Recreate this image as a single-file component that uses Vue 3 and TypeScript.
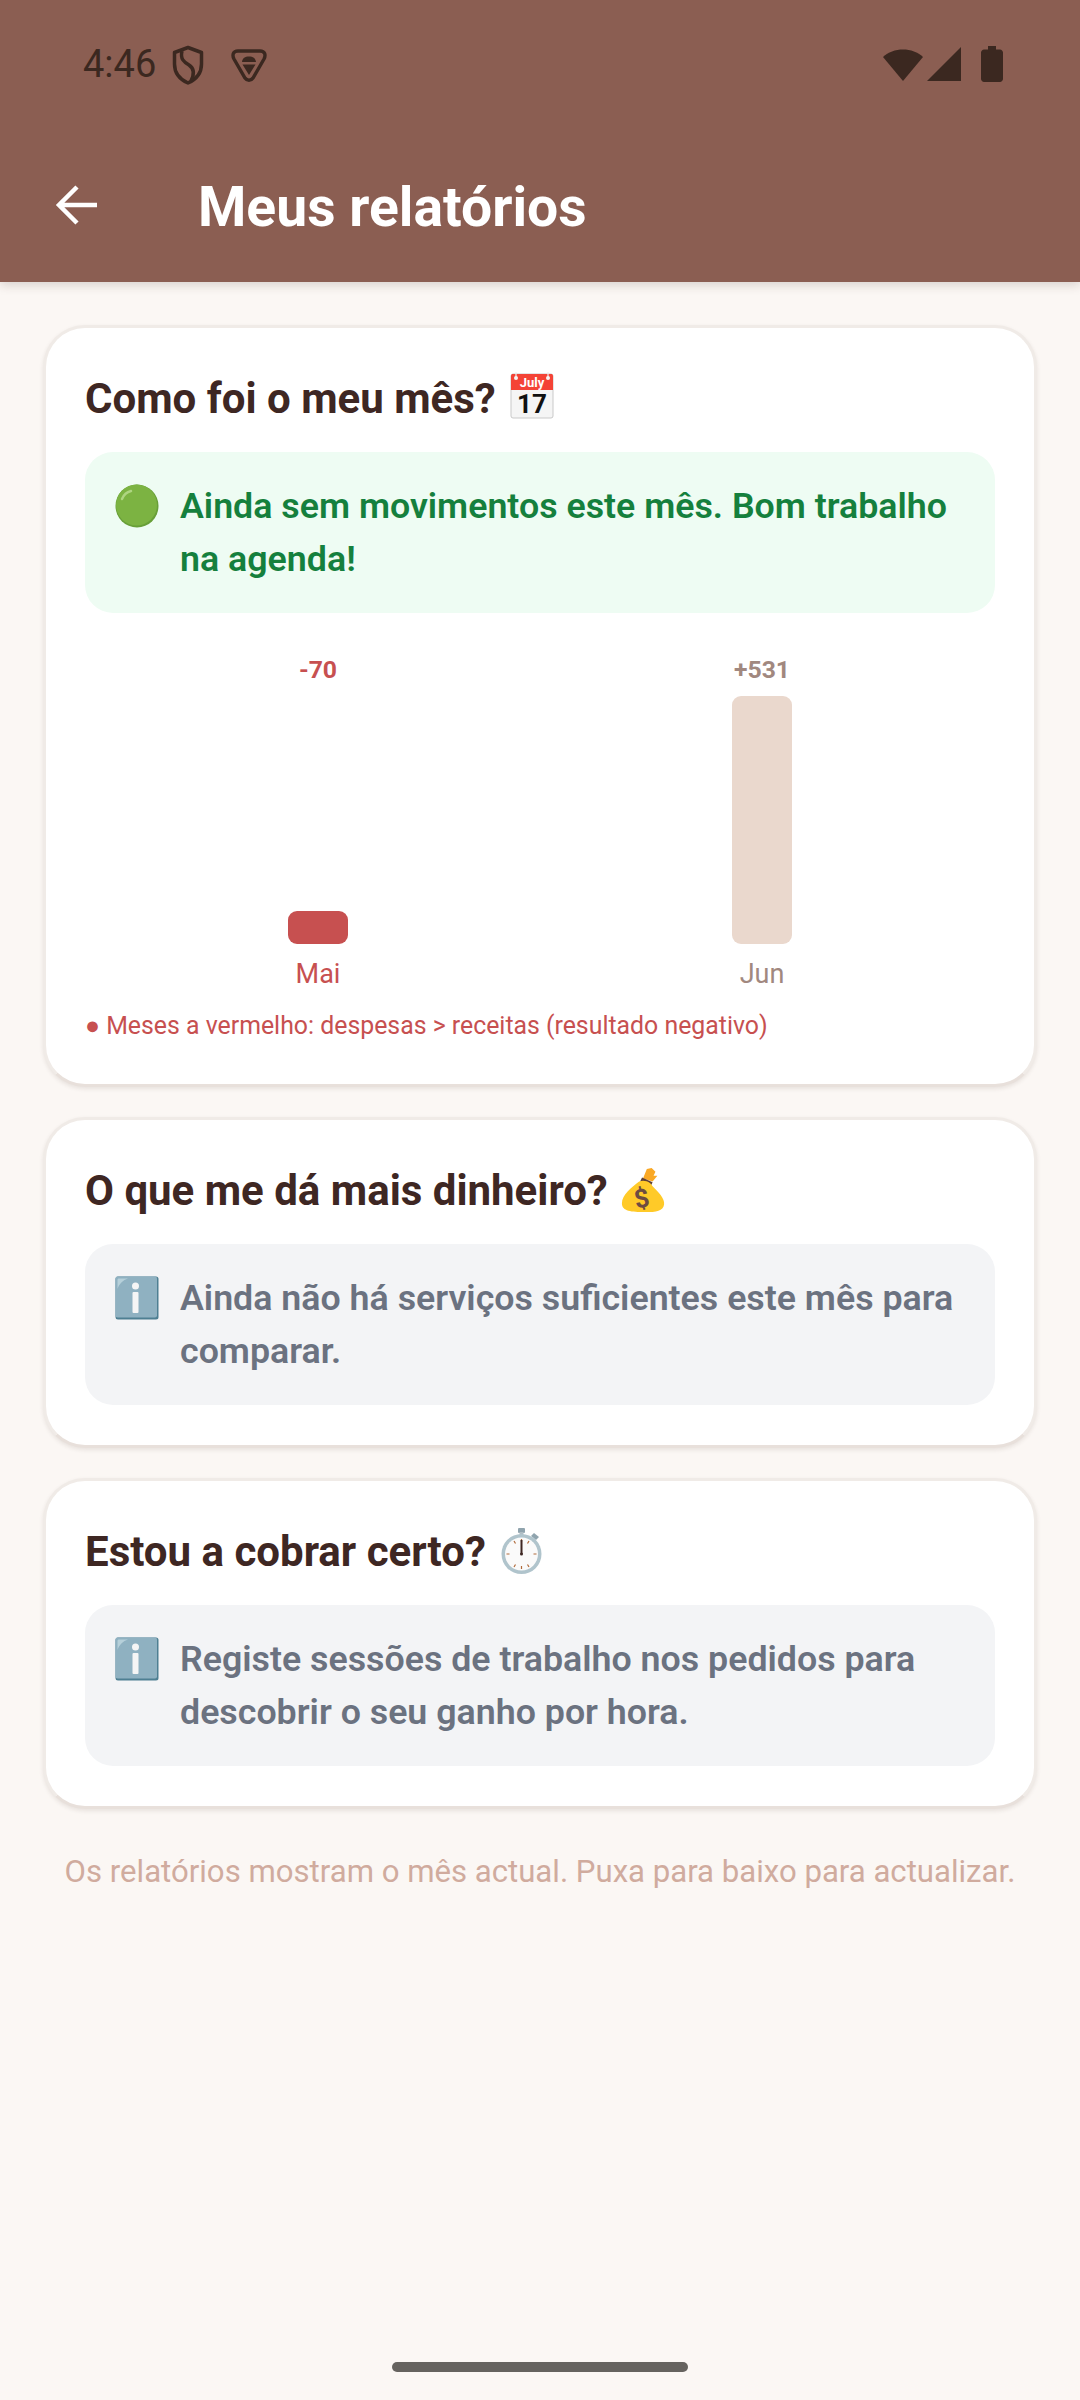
<script setup lang="ts">
interface Bar {
  month: string
  value: string
  height: number
  negative: boolean
}

const bars: Bar[] = [
  { month: 'Mai', value: '-70', height: 33, negative: true },
  { month: 'Jun', value: '+531', height: 248, negative: false },
]
</script>

<template>
  <div class="screen">
    <header class="appbar">
      <div class="status">
        <div class="status-left">
          <span class="time">4:46</span>
          <svg class="shield" viewBox="0 0 34 40" width="34" height="40">
            <path d="M17 2.5 L30.5 7.5 V19 C30.5 28 25 34.5 17 38 C9 34.5 3.5 28 3.5 19 V7.5 Z" fill="none" stroke="#3b2820" stroke-width="3.5" stroke-linejoin="round" />
            <path d="M11 6 C9 14 13 17 18 20 C24 24 23 30 20 36" fill="none" stroke="#3b2820" stroke-width="3.5" />
          </svg>
          <svg class="vpn" viewBox="0 0 38 36" width="38" height="36">
            <path d="M8 4 H30 C35 4 36 8 34 12 L23 31 C21 34 17 34 15 31 L4 12 C2 8 3 4 8 4 Z" fill="none" stroke="#3b2820" stroke-width="3.4" />
            <path d="M12 15 C12.5 11 15 9.5 19 9.5 C23 9.5 25.5 11 26 15 Z M12.5 17.5 H25.5 L19 28 Z" fill="#3b2820" />
          </svg>
        </div>
        <div class="status-right">
          <svg viewBox="0 0 42 36" width="42" height="36">
            <path d="M1 11 C11 1 31 1 41 11 L21 35 Z" fill="#3b2820" />
          </svg>
          <svg viewBox="0 0 34 36" width="34" height="36">
            <path d="M0 35 L34 1 V35 Z" fill="#3b2820" />
          </svg>
          <svg class="battery" viewBox="0 0 22 36" width="22" height="36">
            <path d="M7 0 H15 V3.5 H19 C20.5 3.5 22 5 22 6.5 V33 C22 34.5 20.5 36 19 36 H3 C1.5 36 0 34.5 0 33 V6.5 C0 5 1.5 3.5 3 3.5 H7 Z" fill="#3b2820" />
          </svg>
        </div>
      </div>
      <div class="toolbar">
        <svg class="back" viewBox="0 0 48 48" width="48" height="48">
          <path d="M44 24 H7 M24 6 L6 24 L24 42" fill="none" stroke="#fff" stroke-width="4.5" />
        </svg>
        <h1 class="page-title">Meus relatórios</h1>
      </div>
    </header>

    <main class="content">
      <section class="card">
        <h2 class="card-title">
          Como foi o meu mês?
          <svg class="title-emoji cal" viewBox="0 0 44 48" width="44" height="48">
            <rect x="1" y="3" width="42" height="44" rx="2" fill="#f5f5f5" stroke="#c9c9c9" />
            <path d="M1 5 C1 3.5 2 3 3 3 H41 C42 3 43 3.5 43 5 V19 H1 Z" fill="#f44336" />
            <path d="M6 1 V6 M38 1 V6" stroke="#eeeeee" stroke-width="1.2" />
            <circle cx="6" cy="7" r="2" fill="#f5f5f5" />
            <circle cx="38" cy="7" r="2" fill="#f5f5f5" />
            <text x="22" y="15.5" class="cal-month">July</text>
            <text x="22" y="42" class="cal-day">17</text>
          </svg>
        </h2>
        <div class="alert alert-ok">
          <svg class="alert-emoji" viewBox="0 0 44 44" width="44" height="44">
            <circle cx="22" cy="22" r="21.5" fill="#689f38" />
            <circle cx="21.5" cy="21" r="20.5" fill="#7cb342" />
            <path d="M7 15 C9 10 12 8 16 7" fill="none" stroke="#aed581" stroke-width="2.5" stroke-linecap="round" />
          </svg>
          <p>Ainda sem movimentos este mês. Bom trabalho na agenda!</p>
        </div>

        <div class="chart">
          <div v-for="bar in bars" :key="bar.month" class="chart-col" :class="{ negative: bar.negative }">
            <span class="bar-value">{{ bar.value }}</span>
            <div class="bar-track">
              <div class="bar" :style="{ height: bar.height + 'px' }"></div>
            </div>
            <span class="bar-month">{{ bar.month }}</span>
          </div>
        </div>
        <p class="chart-note">● Meses a vermelho: despesas &gt; receitas (resultado negativo)</p>
      </section>

      <section class="card">
        <h2 class="card-title">
          O que me dá mais dinheiro?
          <svg class="title-emoji" viewBox="0 0 48 48" width="46" height="46">
            <path d="M28 2 L33 1 L37 5 L35 9 L39 9 L34 15 L24 12 Z" fill="#f9a825" />
            <path d="M23 11 L34 16 L32 20 L21 15 Z" fill="#5d4037" />
            <path d="M20 15 C28 13 32 17 34 20 C40 26 47 33 46 39 C45 46 38 47 26 47 C12 47 2 46 2 38 C2 29 12 21 20 15 Z" fill="#ffca28" />
            <text x="23" y="42" class="bag-sign" transform="rotate(-12 23 34)">$</text>
          </svg>
        </h2>
        <div class="alert alert-info">
          <svg class="alert-emoji" viewBox="0 0 44 44" width="44" height="44">
            <rect x="0.5" y="0.5" width="43" height="43" rx="2.5" fill="#4e7f92" />
            <rect x="0.5" y="0.5" width="41.5" height="41" rx="2" fill="#8fb1c1" />
            <path d="M2.5 13 V4 C2.5 3 3 2.5 4 2.5 H13 C8 4 4 8 2.5 13 Z" fill="#b6d0da" />
            <circle cx="20.5" cy="10" r="3.5" fill="#f5f5f5" />
            <rect x="17.5" y="16" width="6" height="21" rx="1" fill="#f5f5f5" />
          </svg>
          <p>Ainda não há serviços suficientes este mês para comparar.</p>
        </div>
      </section>

      <section class="card">
        <h2 class="card-title">
          Estou a cobrar certo?
          <svg class="title-emoji" viewBox="0 0 48 48" width="48" height="48">
            <rect x="20" y="1" width="7" height="5" rx="1" fill="#90a4ae" />
            <rect x="21.5" y="5" width="4" height="5" fill="#b0bec5" />
            <path d="M36 6 L41 10 L38 13 L33 9 Z" fill="#90a4ae" />
            <circle cx="23.5" cy="27" r="20" fill="#b0c4cc" />
            <circle cx="23.5" cy="27" r="16.5" fill="#fafafa" />
            <path d="M23.5 12 V15 M23.5 39 V42 M8.5 27 H11.5 M35.5 27 H38.5 M16 14 L17.5 16.5 M31 14 L29.5 16.5 M16 40 L17.5 37.5 M31 40 L29.5 37.5" stroke="#b06a3a" stroke-width="1.2" />
            <path d="M23.5 13 V27" stroke="#3e2723" stroke-width="2" />
            <circle cx="23.5" cy="27" r="1.5" fill="#3e2723" />
          </svg>
        </h2>
        <div class="alert alert-info">
          <svg class="alert-emoji" viewBox="0 0 44 44" width="44" height="44">
            <rect x="0.5" y="0.5" width="43" height="43" rx="2.5" fill="#4e7f92" />
            <rect x="0.5" y="0.5" width="41.5" height="41" rx="2" fill="#8fb1c1" />
            <path d="M2.5 13 V4 C2.5 3 3 2.5 4 2.5 H13 C8 4 4 8 2.5 13 Z" fill="#b6d0da" />
            <circle cx="20.5" cy="10" r="3.5" fill="#f5f5f5" />
            <rect x="17.5" y="16" width="6" height="21" rx="1" fill="#f5f5f5" />
          </svg>
          <p>Registe sessões de trabalho nos pedidos para descobrir o seu ganho por hora.</p>
        </div>
      </section>

      <p class="footnote">Os relatórios mostram o mês actual. Puxa para baixo para actualizar.</p>
    </main>

    <div class="home-bar"></div>
  </div>
</template>

<style>
html,
body {
  margin: 0;
  background: #fbf7f4;
}
</style>

<style scoped>
.screen {
  position: relative;
  width: 1080px;
  height: 2400px;
  overflow: hidden;
  background: #fbf7f4;
  font-family: Roboto, "Noto Sans", sans-serif;
}

.appbar {
  height: 282px;
  background: #8b5e52;
  box-shadow: 0 3px 10px rgba(60, 40, 30, 0.18);
  box-sizing: border-box;
  padding-top: 43px;
}

.status {
  display: flex;
  justify-content: space-between;
  align-items: center;
  height: 44px;
  padding: 0 77px 0 83px;
}

.status-left {
  display: flex;
  align-items: center;
}

.time {
  margin-top: -2px;
  font-size: 38px;
  color: #3b2820;
}

.shield {
  margin-left: 15px;
}

.vpn {
  margin-left: 25px;
}

.status-right {
  display: flex;
  align-items: center;
  gap: 3px;
  margin-top: -2px;
}

.battery {
  margin-left: 17px;
}

.toolbar {
  display: flex;
  align-items: center;
  margin-top: 88px;
  padding-left: 53px;
}

.back {
  flex: none;
  margin-bottom: 4px;
}

.page-title {
  margin: 0 0 0 97px;
  font-size: 55.25px;
  font-weight: 700;
  color: #fff;
}

.content {
  display: flex;
  flex-direction: column;
  gap: 30px;
  padding: 43px 43px 0;
}

.card {
  box-sizing: border-box;
  background: #fff;
  border: 3px solid #f0ebe7;
  border-bottom-color: #e8e0db;
  border-radius: 42px;
  padding: 40px 39px;
  box-shadow: 0 2px 4px rgba(60, 40, 30, 0.1);
}

.card-title {
  display: flex;
  align-items: center;
  gap: 12px;
  margin: 0 0 24px;
  height: 60px;
  font-size: 42px;
  font-weight: 700;
  color: #3e2723;
}

.title-emoji {
  flex: none;
}

.cal {
  margin: -6px 0 0 2px;
}

.cal-month {
  font-size: 13px;
  fill: #fff;
  text-anchor: middle;
  font-family: Roboto, sans-serif;
}

.cal-day {
  font-size: 26px;
  font-weight: 700;
  fill: #111;
  text-anchor: middle;
  font-family: Roboto, sans-serif;
}

.bag-sign {
  font-size: 27px;
  font-weight: 700;
  fill: #6d4c41;
  text-anchor: middle;
  font-family: Roboto, sans-serif;
}

.alert {
  display: flex;
  align-items: flex-start;
  gap: 21px;
  padding: 28px 30px;
  border-radius: 28px;
}

.alert p {
  margin: 0;
  font-size: 35.75px;
  font-weight: 600;
  line-height: 52.5px;
}

.alert-emoji {
  flex: none;
  margin-top: 4px;
}

.alert-ok {
  background: #eefcf3;
  color: #15803d;
}

.alert-info {
  background: #f3f4f6;
  color: #6b7280;
}

.chart {
  display: flex;
  margin-top: 42px;
  padding: 0 11px;
}

.chart-col {
  flex: 1;
  display: flex;
  flex-direction: column;
  align-items: center;
  color: #a1887f;
}

.chart-col.negative {
  color: #c75050;
}

.bar-value {
  font-size: 24.75px;
  font-weight: 700;
  line-height: 30px;
  color: inherit;
}

.bar-track {
  height: 248px;
  margin-top: 11px;
  display: flex;
  align-items: flex-end;
}

.bar {
  width: 60px;
  border-radius: 9px;
  background: #ead8cd;
}

.negative .bar {
  background: #c75050;
}

.bar-month {
  margin-top: 14px;
  font-size: 27px;
  line-height: 32px;
}

.chart-note {
  margin: 18px 0 0;
  font-size: 24.85px;
  line-height: 36px;
  color: #c75050;
}

.footnote {
  margin: 13px -40px 0;
  text-align: center;
  font-size: 31.15px;
  line-height: 40px;
  color: #d0ab9e;
  white-space: nowrap;
}

.home-bar {
  position: absolute;
  left: 392px;
  top: 2362px;
  width: 296px;
  height: 10px;
  border-radius: 5px;
  background: #66635f;
}
</style>
